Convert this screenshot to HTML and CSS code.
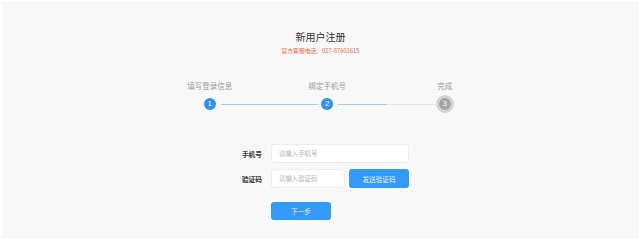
FILE: index.html
```html
<!DOCTYPE html>
<html lang="zh">
<head>
<meta charset="utf-8">
<link rel="stylesheet" href="styles.css">
</head>
<body>
<div class="page">
  <div class="head">
    <h1 class="title">新用户注册</h1>
    <p class="sub">官方客服电话：027-87601615</p>
  </div>
  <div class="steps">
    <div class="step done">
      <span class="label">填写登录信息</span>
      <span class="dot">1</span>
    </div>
    <div class="step active">
      <span class="label">绑定手机号</span>
      <span class="dot">2</span>
    </div>
    <div class="step last">
      <span class="label">完成</span>
      <span class="dot">3</span>
    </div>
  </div>
  <form class="form">
    <label class="flabel">手机号</label>
    <input class="input" type="text" placeholder="请输入手机号">
    <label class="flabel">验证码</label>
    <div class="coderow">
      <input class="input short" type="text" placeholder="请输入验证码">
      <button class="btn send" type="button">发送验证码</button>
    </div>
    <span></span>
    <button class="btn next" type="button">下一步</button>
  </form>
</div>
</body>
</html>
```

FILE: styles.css
```css
html, body {
  margin: 0;
  padding: 0;
  height: 100%;
}
body {
  background: #ffffff;
  padding: 1px 1px 2px 2px;
  box-sizing: border-box;
  font-family: "Noto Sans CJK SC", "Liberation Sans", sans-serif;
}
.page {
  background: #f8f8f8;
  height: 100%;
  box-sizing: border-box;
  padding-top: 28px;
}
.head {
  text-align: center;
}
.title {
  margin: 0;
  font-size: 10px;
  line-height: 16px;
  font-weight: normal;
  color: #333;
}
.sub {
  margin: 2px 0 0;
  font-size: 5.8px;
  line-height: 8px;
  color: #ec6a52;
}
.steps {
  display: grid;
  grid-template-columns: repeat(3, 117.5px);
  width: 352.5px;
  margin: 25px 0 0 149px;
}
.step {
  position: relative;
  display: flex;
  flex-direction: column;
  align-items: center;
}
.label {
  font-size: 7.5px;
  line-height: 11px;
  color: #9a9a9a;
}
.dot {
  margin-top: 7px;
  width: 12px;
  height: 12px;
  border-radius: 50%;
  background: #2f8ff5;
  color: #fff;
  font-family: "Liberation Sans", sans-serif;
  font-size: 8px;
  line-height: 12px;
  text-align: center;
  position: relative;
  z-index: 1;
}
.step.last .dot {
  margin-top: 4px;
  width: 12px;
  height: 12px;
  border: 3px solid #d4d4d4;
  background: #a4a4a4;
}
.step::after {
  content: "";
  position: absolute;
  top: 23.5px;
  left: calc(50% + 11px);
  width: calc(100% - 20px);
  height: 1px;
}
.step.done::after {
  background: #a3cdf7;
}
.step.active::after {
  background: linear-gradient(to right, #a3cdf7 0, #a3cdf7 50%, #e6e6e6 50%, #e6e6e6 100%);
}
.form {
  display: grid;
  grid-template-columns: 30px 138px;
  column-gap: 9px;
  row-gap: 6px;
  width: 177px;
  margin: 31px auto 0;
  align-items: center;
}
.flabel {
  text-align: right;
  font-size: 6.7px;
  color: #333;
  font-weight: bold;
}
.input {
  box-sizing: border-box;
  height: 19px;
  width: 138px;
  border: 1px solid #ececec;
  border-radius: 3px;
  background: #fff;
  padding: 0 0 0 7px;
  font-size: 6.4px;
  font-family: "Noto Sans CJK SC", "Liberation Sans", sans-serif;
  outline: none;
}
.input::placeholder {
  color: #b3b3b3;
}
.coderow {
  display: flex;
  gap: 4px;
}
.input.short {
  width: 74px;
}
.btn {
  border: none;
  background: #3399fb;
  color: #eaf3ff;
  border-radius: 3px;
  font-size: 6.6px;
  font-family: "Noto Sans CJK SC", "Liberation Sans", sans-serif;
  padding: 0;
  height: 19px;
}
.send {
  width: 60px;
}
.next {
  width: 60px;
  height: 18px;
  margin-top: 8px;
}
```
